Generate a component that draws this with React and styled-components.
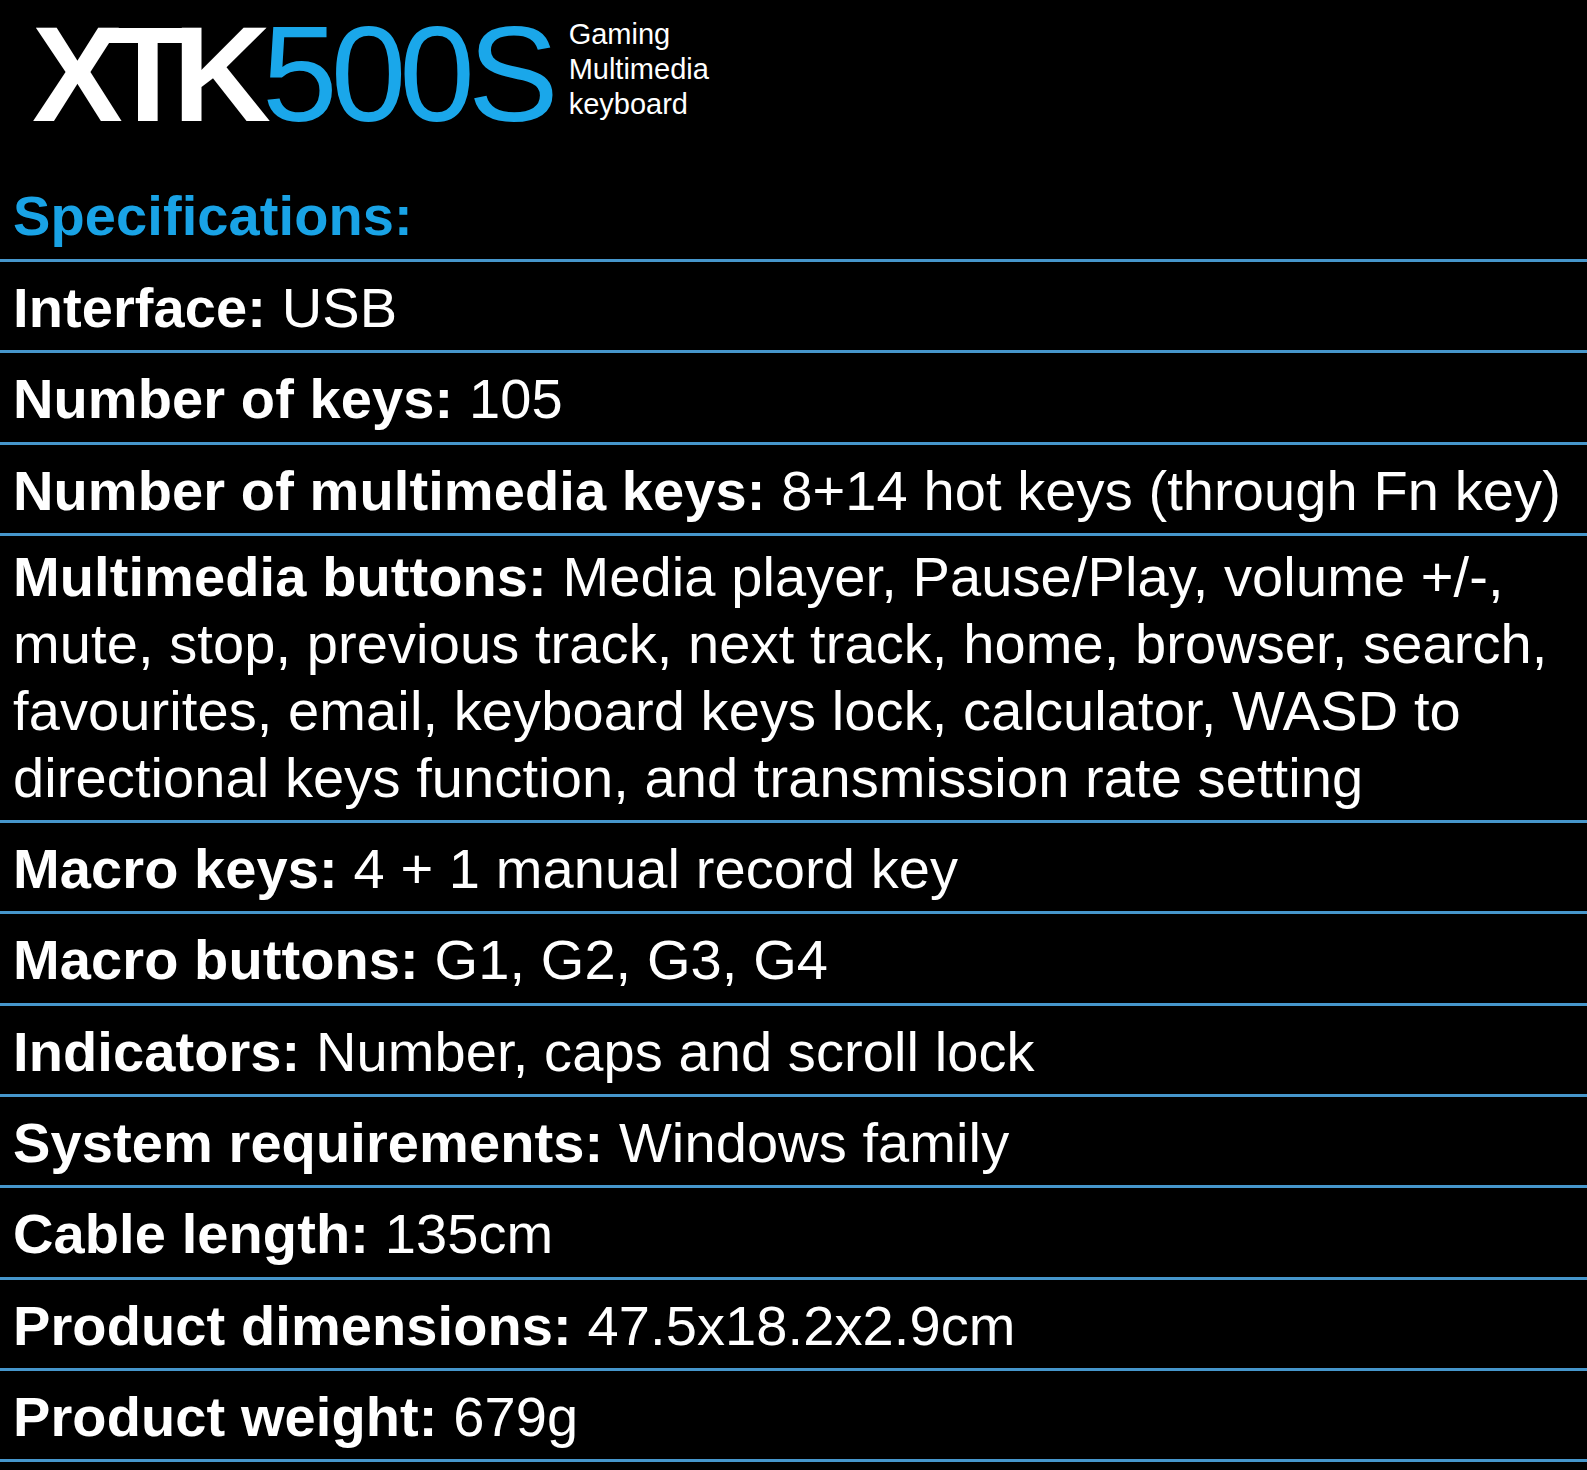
import React from 'react';
import styled, { createGlobalStyle } from 'styled-components';

const GlobalStyle = createGlobalStyle`
    html, body {
        margin: 0;
        padding: 0;
        background: #000;
    }
    body {
        font-family: "Liberation Sans", Arial, sans-serif;
        color: #fff;
    }
`

const specs = [
    { label: 'Interface:', value: 'USB' },
    { label: 'Number of keys:', value: '105' },
    { label: 'Number of multimedia keys:', value: '8+14 hot keys (through Fn key)' },
    {
        label: 'Multimedia buttons:',
        lines: [
            'Media player, Pause/Play, volume +/-,',
            'mute, stop, previous track, next track, home, browser, search,',
            'favourites, email, keyboard keys lock, calculator, WASD to',
            'directional keys function, and transmission rate setting',
        ],
    },
    { label: 'Macro keys:', value: '4 + 1 manual record key' },
    { label: 'Macro buttons:', value: 'G1, G2, G3, G4' },
    { label: 'Indicators:', value: 'Number, caps and scroll lock' },
    { label: 'System requirements:', value: 'Windows family' },
    { label: 'Cable length:', value: '135cm' },
    { label: 'Product dimensions:', value: '47.5x18.2x2.9cm' },
    { label: 'Product weight:', value: '679g' },
];

const App = () => {
    return (<Page>
        <GlobalStyle />
        <Header>
            <Logo>
                <LogoWhite>XTK</LogoWhite>
                <LogoBlue>500S</LogoBlue>
            </Logo>
            <Tagline>
                <span>Gaming</span>
                <span>Multimedia</span>
                <span>keyboard</span>
            </Tagline>
        </Header>
        <Title>Specifications:</Title>
        <SpecList>
            {specs.map(spec => {
                return <SpecRow key={spec.label} multiline={spec.lines ? 1 : 0}>
                    <Label>{spec.label}</Label>{' '}
                    {spec.lines ?
                        spec.lines.map((line, i) => (
                            <React.Fragment key={i}>
                                {i > 0 && <br />}
                                {line}
                            </React.Fragment>
                        )) :
                        spec.value}
                </SpecRow>
            })}
        </SpecList>
    </Page>);
}

export default App;

const Page = styled.div`
    width: 1587px;
    min-height: 1470px;
    background: #000;
`

const Header = styled.header`
    display: flex;
    align-items: flex-start;
    height: 182px;
    padding-left: 32px;
`

const Logo = styled.div`
    display: flex;
    margin-top: -4px;
    font-size: 136px;
    line-height: normal;
    white-space: nowrap;
`

// trailing padding gives back the last letter's negative spacing
const LogoWhite = styled.span`
    color: #fff;
    font-weight: bold;
    letter-spacing: -16.5px;
    padding-right: 16.5px;
`

const LogoBlue = styled.span`
    color: #1aa7ea;
    font-weight: normal;
    letter-spacing: -7px;
    padding-right: 7px;
    margin-left: -9px;
`

const Tagline = styled.div`
    display: flex;
    flex-direction: column;
    margin: 17px 0 0 10px;
    font-size: 29px;
    line-height: 35px;
    color: #fff;
`

const Title = styled.h2`
    margin: 0;
    padding: 0 0 10px 13px;
    font-size: 56px;
    line-height: 67px;
    font-weight: bold;
    letter-spacing: 0.1px;
    color: #19a3e6;
`

const SpecList = styled.div`
    border-bottom: 3px solid #4696cb;
`

const SpecRow = styled.div`
    border-top: 3px solid #4696cb;
    padding: ${props => props.multiline ? '7px' : '12px'} 2px 9.3px 13px;
    font-size: 56px;
    line-height: 67px;
    letter-spacing: 0.1px;
    color: #fff;
`

const Label = styled.span`
    font-weight: bold;
`
